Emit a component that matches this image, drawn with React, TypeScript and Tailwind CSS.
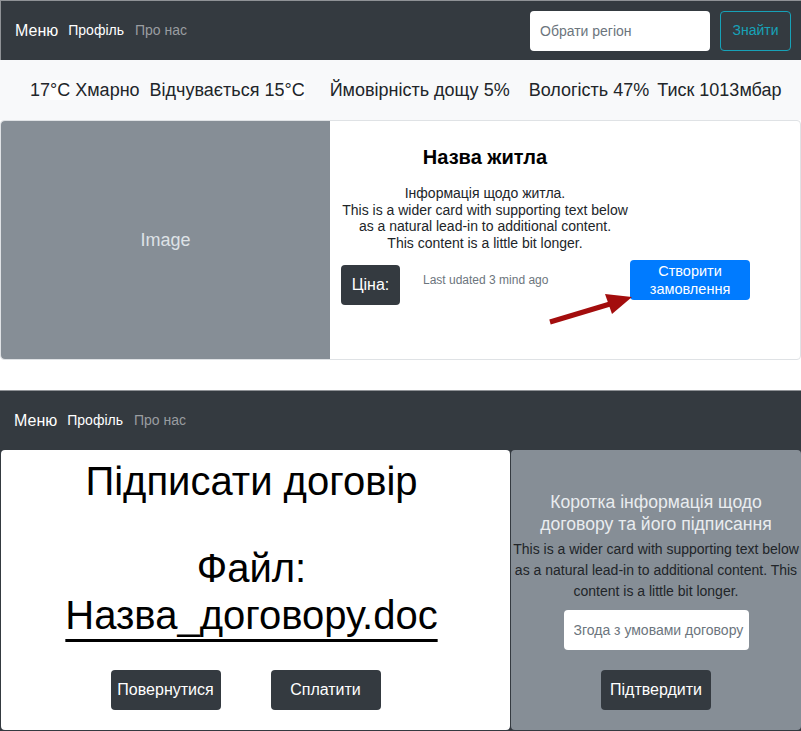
export default function App() {
  const navLinks = (
    <div className="flex items-center">
      <span className="text-[16px] text-white">Меню</span>
      <span className="ml-[10px] text-[14px] text-white">Профіль</span>
      <span className="ml-[11px] text-[14px] text-[#9a9da1]">Про нас</span>
    </div>
  );

  return (
    <div
      className="relative w-[801px] h-[731px] overflow-hidden bg-white text-[#212529]"
      style={{ fontFamily: '"Liberation Sans", Arial, sans-serif' }}
    >
      {/* Top navbar */}
      <nav className="flex h-[60px] items-center justify-between border-t border-l border-[#8f9296] bg-[#343a40] pl-[14px] pr-[10px]">
        {navLinks}
        <div className="flex items-center gap-[10px]">
          <input
            placeholder="Обрати регіон"
            className="h-[40px] w-[180px] rounded-[4px] bg-white px-[10px] text-[14px] text-[#495057] outline-none placeholder:text-[#6c757d]"
          />
          <button className="h-[40px] w-[71px] rounded-[4px] border border-[#17a2b8] text-[14px] text-[#17a2b8]">
            Знайти
          </button>
        </div>
      </nav>

      {/* Weather */}
      <div className="flex h-[60px] items-center bg-[#f8f9fa] pl-[30px] text-[18px] whitespace-nowrap">
        <span>
          17<span className="bg-white">°C</span> Хмарно
        </span>
        <span className="ml-[10px]">
          Відчувається 15<span className="bg-white">°C</span>
        </span>
        <span className="ml-[25px]">Ймовірність дощу 5%</span>
        <span className="ml-[19px]">Вологість 47%</span>
        <span className="ml-[8px]">Тиск 1013мбар</span>
      </div>

      {/* Housing card */}
      <div className="flex h-[240px] rounded-[4px] border border-[#dfe2e5]">
        <div className="flex w-[329px] items-center justify-center rounded-l-[4px] bg-[#868e96] text-[18px] text-[#dee2e6]">
          Image
        </div>
        <div className="relative flex-1 pl-[10px] pt-[24px]">
          <div className="w-[290px] text-center">
            <h5 className="text-[20px] font-bold leading-[24px] text-black">Назва житла</h5>
            <p className="mt-[16px] text-[14px] leading-[16.7px] whitespace-nowrap">
              Інформація щодо житла.
              <br />
              This is a wider card with supporting text below
              <br />
              as a natural lead-in to additional content.
              <br />
              This content is a little bit longer.
            </p>
          </div>
          <div className="mt-[8px] flex w-[410px] items-start">
            <button className="ml-[1px] mt-[5px] h-[40px] w-[59px] rounded-[4px] bg-[#343a40] text-[16px] text-white">
              Ціна:
            </button>
            <span className="ml-[23px] mt-[11px] text-[12px] text-[#6c757d]">Last udated 3 mind ago</span>
            <button className="ml-auto h-[40px] w-[120px] rounded-[4px] bg-[#007bff] text-[14.5px] leading-[18px] text-white">
              Створити
              <br />
              замовлення
            </button>
          </div>
          <svg
            className="absolute left-[210px] top-[164px]"
            width="100"
            height="45"
            viewBox="0 0 100 45"
          >
            <line x1="10" y1="37" x2="70" y2="19" stroke="#a30d0d" strokeWidth="5" />
            <polygon points="92,12 72,29 65,9" fill="#a30d0d" />
          </svg>
        </div>
      </div>

      <div className="h-[30px]" />

      {/* Bottom navbar */}
      <nav className="flex h-[60px] items-center border-t border-[#8f9296] bg-[#343a40] pl-[14px]">
        {navLinks}
      </nav>

      {/* Contract section */}
      <div className="flex h-[281px] bg-[#343a40] pl-[1px] pb-[1px]">
        <div className="flex w-[509px] flex-col items-center rounded-[4px] bg-white pt-[8px] pr-[8px] text-black">
          <h1 className="text-[40px] leading-[47px] whitespace-nowrap">Підписати договір</h1>
          <p className="mt-[40px] text-[40px] leading-[47px]">Файл:</p>
          <a className="text-[40px] leading-[47px] whitespace-nowrap underline decoration-[3px] underline-offset-[10px]">
            Назва_договору.doc
          </a>
          <div className="mt-[31px] mr-[12px] flex gap-[50px]">
            <button className="h-[40px] w-[110px] rounded-[4px] bg-[#343a40] text-[16px] text-white">
              Повернутися
            </button>
            <button className="h-[40px] w-[110px] rounded-[4px] bg-[#343a40] text-[16px] text-white">
              Сплатити
            </button>
          </div>
        </div>
        <div className="ml-[1px] flex flex-1 flex-col items-center rounded-[4px] bg-[#868e96] pt-[41px] text-center">
          <h5 className="text-[17.6px] leading-[22px] whitespace-nowrap text-[#e9ecef]">
            Коротка інформація щодо
            <br />
            договору та його підписання
          </h5>
          <p className="mt-[4px] text-[14px] leading-[21px] whitespace-nowrap text-[#212529]">
            This is a wider card with supporting text below
            <br />
            as a natural lead-in to additional content. This
            <br />
            content is a little bit longer.
          </p>
          <input
            placeholder="Згода з умовами договору"
            className="mt-[8px] h-[40px] w-[185px] rounded-[4px] bg-white pl-[10px] pr-0 text-[14px] outline-none placeholder:text-[#6c757d]"
          />
          <button className="mt-[20px] h-[40px] w-[110px] rounded-[4px] bg-[#343a40] text-[16px] text-white">
            Підтвердити
          </button>
        </div>
      </div>
    </div>
  );
}
